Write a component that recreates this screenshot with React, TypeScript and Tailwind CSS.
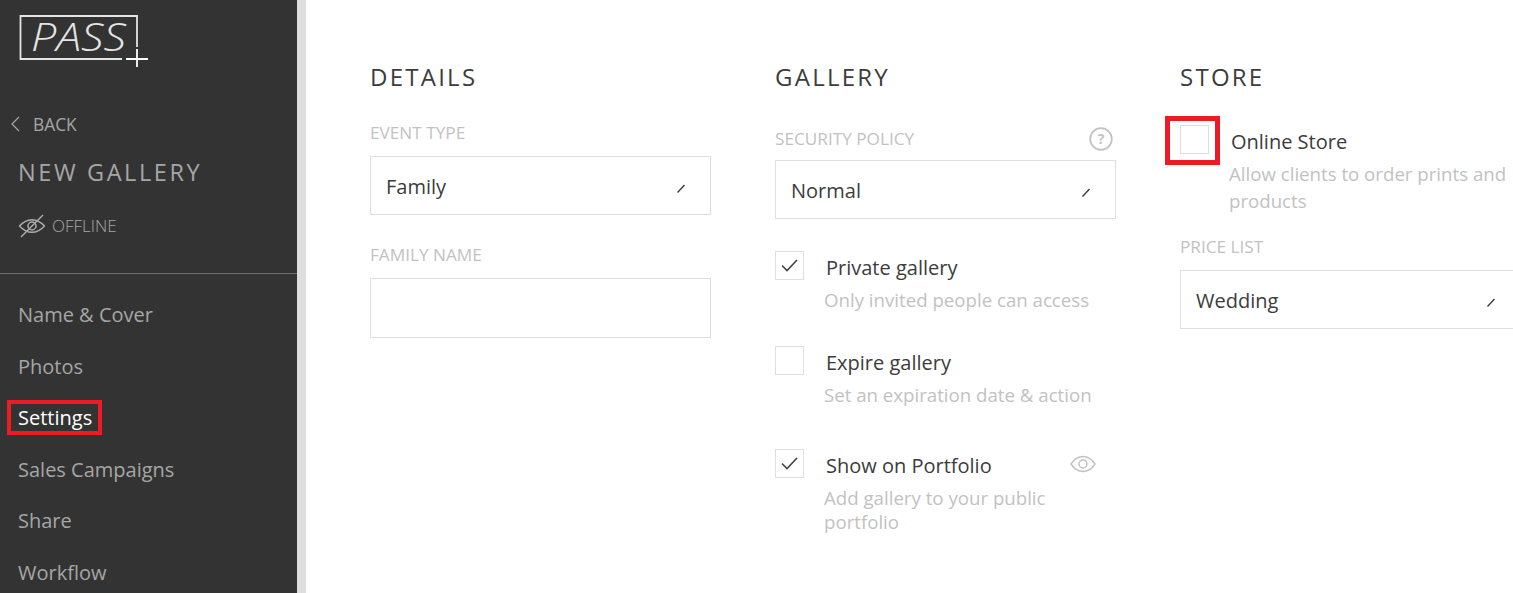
import React from 'react';

const navItems = ['Name & Cover', 'Photos', 'Settings', 'Sales Campaigns', 'Share', 'Workflow'];

function SelectBox({ value }: { value: string }) {
  return (
    <div className="flex h-[59px] w-[341px] items-center justify-between border border-[#dedede] pl-[15px] pr-[25px]">
      <span className="pt-[2px] text-[20px] text-[#3c3c3c]">{value}</span>
      <svg width="8" height="9" viewBox="0 0 8 9" className="mt-[5px]">
        <path d="M0.5 8.5 L7.5 1" stroke="#3c3c3c" strokeWidth="1.4" fill="none" />
      </svg>
    </div>
  );
}

function CheckBox({ checked }: { checked?: boolean }) {
  return (
    <div className="flex h-[29px] w-[29px] shrink-0 items-center justify-center border border-[#dedede]">
      {checked && (
        <svg width="17" height="13" viewBox="0 0 17 13">
          <path d="M1 6.5 L6 11.5 L16 1" stroke="#444" strokeWidth="1.6" fill="none" />
        </svg>
      )}
    </div>
  );
}

function Label({ children }: { children: React.ReactNode }) {
  return <div className="text-[17.2px] leading-[22px] text-[#c2c2c2]">{children}</div>;
}

function Heading({ children }: { children: string }) {
  return <h2 className="text-[24px] leading-[30px] tracking-[2.25px] text-[#3c3c3c]">{children}</h2>;
}

function CheckRow({ title, desc, checked, className }: { title: string; desc: string; checked?: boolean; className?: string }) {
  return (
    <div className={className}>
      <div className="flex items-start gap-[22px]">
        <CheckBox checked={checked} />
        <span className="text-[20px] leading-[34px] text-[#3c3c3c]">{title}</span>
      </div>
      <p className="ml-[49px] mt-[3px] w-[270px] text-[18.67px] leading-[24px] text-[#c2c2c2]">{desc}</p>
    </div>
  );
}

export default function App() {
  return (
    <div className="flex h-[593px] w-[1513px] overflow-hidden bg-white font-['Open_Sans',sans-serif]">
      <aside className="h-full w-[297px] shrink-0 overflow-hidden bg-[#333333]">
        <div className="pl-[18px] pt-[14px]">
          <svg width="132" height="56" viewBox="0 0 132 56" className="block">
            <path d="M104 45 H2.5 V2 H119 V33" stroke="#e4e4e4" strokeWidth="1.8" fill="none" />
            <text x="13" y="37" textLength="95" lengthAdjust="spacingAndGlyphs" fill="#e4e4e4" fontSize="38" fontStyle="italic" fontWeight="300" fontFamily="'Open Sans', sans-serif">PASS</text>
            <path d="M108 45 H130 M119 35 V53" stroke="#ffffff" strokeWidth="1.8" fill="none" />
          </svg>
        </div>
        <div className="mt-[42px] flex items-center pl-[10px] text-[#a6a6a6]">
          <svg width="10" height="16" viewBox="0 0 10 16">
            <path d="M9 1 L2 8 L9 15" stroke="#a6a6a6" strokeWidth="1.2" fill="none" />
          </svg>
          <span className="ml-[13px] text-[17.33px] leading-[24px]">BACK</span>
        </div>
        <div className="mt-[21px] pl-[18px] text-[23.5px] leading-[30px] tracking-[2.6px] text-[#a6a6a6]">NEW GALLERY</div>
        <div className="mt-[27px] flex items-center pl-[18px]">
          <svg width="28" height="24" viewBox="0 0 28 24">
            <path d="M1.5 12 C6 7 10 5.7 14 5.7 C18 5.7 22 7 26.5 12 C22 17 18 18.3 14 18.3 C10 18.3 6 17 1.5 12 Z" stroke="#acacac" strokeWidth="1.4" fill="none" />
            <circle cx="14" cy="12" r="4" stroke="#acacac" strokeWidth="1.5" fill="none" />
            <path d="M3 23 L25 1" stroke="#acacac" strokeWidth="1.4" />
          </svg>
          <span className="ml-[6px] text-[17px] font-light leading-[24px] text-[#a6a6a6]">OFFLINE</span>
        </div>
        <div className="mt-[35px] border-t border-[#6e6e6e]" />
        <nav className="mt-[15px] flex flex-col pl-[7px]">
          {navItems.map((item) => (
            <a key={item} className="flex h-[51.5px] shrink-0 items-center">
              <span
                className={
                  item === 'Settings'
                    ? 'border-[4px] border-[#ed1c24] pl-[7px] pr-[6px] text-[20px] leading-[27px] text-white'
                    : 'border-[4px] border-transparent pl-[7px] text-[20px] leading-[27px] text-[#a6a6a6]'
                }
              >
                {item}
              </span>
            </a>
          ))}
        </nav>
      </aside>
      <div className="h-full w-[9px] shrink-0 bg-[#dedede]" />
      <main className="flex gap-[64px] pl-[64px] pt-[62px]">
        <section className="w-[341px] shrink-0">
          <Heading>DETAILS</Heading>
          <div className="mt-[30px]"><Label>EVENT TYPE</Label></div>
          <div className="mt-[12px]"><SelectBox value="Family" /></div>
          <div className="mt-[29px]"><Label>FAMILY NAME</Label></div>
          <div className="mt-[12px] h-[60px] w-[341px] border border-[#dedede]" />
        </section>
        <section className="w-[341px] shrink-0">
          <Heading>GALLERY</Heading>
          <div className="mt-[36px] flex items-start justify-between pr-[3px]">
            <Label>SECURITY POLICY</Label>
            <svg width="24" height="24" viewBox="0 0 24 24" className="-my-[1px]">
              <circle cx="12" cy="12" r="10.8" stroke="#c2c2c2" strokeWidth="1.8" fill="none" />
              <text x="12" y="17" textAnchor="middle" fontSize="14" fontWeight="700" fill="#c2c2c2" fontFamily="'Open Sans', sans-serif">?</text>
            </svg>
          </div>
          <div className="mt-[10px]"><SelectBox value="Normal" /></div>
          <CheckRow className="mt-[32px]" checked title="Private gallery" desc="Only invited people can access" />
          <CheckRow className="mt-[34px]" title="Expire gallery" desc="Set an expiration date & action" />
          <div className="relative">
            <CheckRow className="mt-[42px]" checked title="Show on Portfolio" desc="Add gallery to your public portfolio" />
            <svg width="26" height="18" viewBox="0 0 26 18" className="absolute left-[295px] top-[6px]">
              <path d="M1 9 C5 3 9 1.5 13 1.5 C17 1.5 21 3 25 9 C21 15 17 16.5 13 16.5 C9 16.5 5 15 1 9 Z" stroke="#c2c2c2" strokeWidth="1.5" fill="none" />
              <circle cx="13" cy="9" r="4" stroke="#c2c2c2" strokeWidth="1.5" fill="none" />
            </svg>
          </div>
        </section>
        <section className="w-[341px] shrink-0">
          <Heading>STORE</Heading>
          <div className="relative mt-[33px]">
            <div className="flex items-start gap-[22px]">
              <CheckBox />
              <span className="text-[20px] leading-[34px] text-[#3c3c3c]">Online Store</span>
            </div>
            <div className="absolute -left-[15px] -top-[9px] h-[49px] w-[55px] border-[5px] border-[#ed1c24]" />
            <p className="ml-[49px] mt-[1px] w-[290px] text-[18.67px] leading-[27px] text-[#c2c2c2]">Allow clients to order prints and products</p>
          </div>
          <div className="mt-[22px]"><Label>PRICE LIST</Label></div>
          <div className="mt-[12px]"><SelectBox value="Wedding" /></div>
        </section>
      </main>
    </div>
  );
}
